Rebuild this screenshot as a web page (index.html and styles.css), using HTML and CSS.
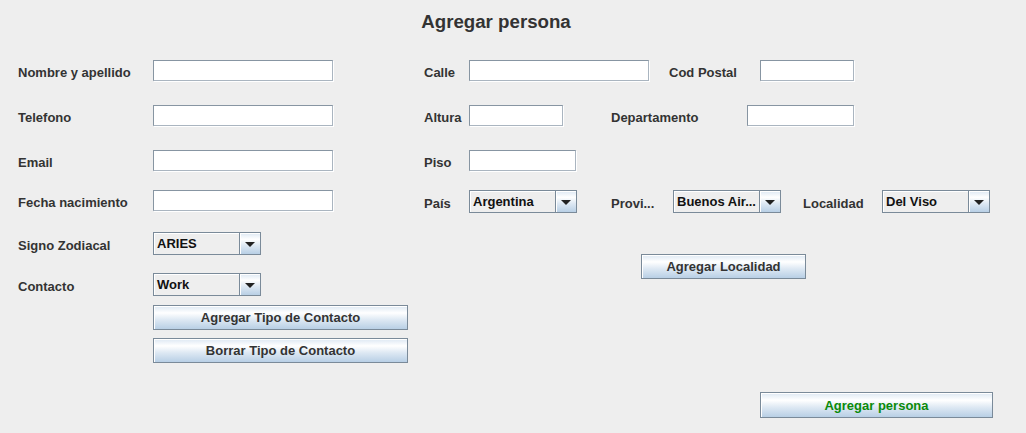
FILE: index.html
```html
<!DOCTYPE html>
<html lang="es">
<head>
<meta charset="utf-8">
<title>Agregar persona</title>
<link rel="stylesheet" href="styles.css">
</head>
<body>
<header class="header"><h1 class="title">Agregar persona</h1></header>
<main class="form">
  <section class="col col-left">
    <div class="row r1"><span class="lbl lw-left">Nombre y apellido</span><input class="tf w181" type="text"></div>
    <div class="row r2"><span class="lbl lw-left">Telefono</span><input class="tf w181" type="text"></div>
    <div class="row r3"><span class="lbl lw-left">Email</span><input class="tf w181" type="text"></div>
    <div class="row r4"><span class="lbl lw-left">Fecha nacimiento</span><input class="tf w181" type="text"></div>
    <div class="row r5"><span class="lbl lw-left">Signo Zodiacal</span><div class="combo"><span class="combo-val">ARIES</span><span class="combo-btn"><span class="tri"></span></span></div></div>
    <div class="row r6"><span class="lbl lw-left">Contacto</span><div class="combo"><span class="combo-val">Work</span><span class="combo-btn"><span class="tri"></span></span></div></div>
    <div class="row r7"><span class="lw-left"></span><button class="btn w255" type="button">Agregar Tipo de Contacto</button></div>
    <div class="row r8"><span class="lw-left"></span><button class="btn w255" type="button">Borrar Tipo de Contacto</button></div>
  </section>
  <section class="col col-right">
    <div class="row r1"><span class="lbl lw-right">Calle</span><input class="tf w181" type="text"><span class="lbl cod">Cod Postal</span><input class="tf w95" type="text"></div>
    <div class="row r2"><span class="lbl lw-right">Altura</span><input class="tf w95" type="text"><span class="lbl depto">Departamento</span><input class="tf w108" type="text"></div>
    <div class="row r3"><span class="lbl lw-right">Piso</span><input class="tf w108" type="text"></div>
    <div class="row r4r"><span class="lbl lw-right">País</span><div class="combo"><span class="combo-val">Argentina</span><span class="combo-btn"><span class="tri"></span></span></div><span class="lbl prov">Provi...</span><div class="combo"><span class="combo-val">Buenos Air...</span><span class="combo-btn"><span class="tri"></span></span></div><span class="lbl loc">Localidad</span><div class="combo"><span class="combo-val">Del Viso</span><span class="combo-btn"><span class="tri"></span></span></div></div>
    <div class="row r5r"><button class="btn btn-loc" type="button">Agregar Localidad</button></div>
  </section>
</main>
<footer class="footer"><button class="btn btn-save" type="button">Agregar persona</button></footer>
</body>
</html>
```

FILE: styles.css
```css
html, body {
  margin: 0;
  padding: 0;
}
body {
  background: #eeeeee;
  font-family: "Liberation Sans", Arial, sans-serif;
  font-weight: bold;
  font-size: 13px;
  color: #333333;
  width: 1026px;
  height: 433px;
  overflow: hidden;
}
.header {
  width: 992px;
  height: 44px;
  display: flex;
  justify-content: center;
  align-items: center;
}
.title {
  margin: 0;
  font-size: 18.7px;
  line-height: 44px;
  font-weight: bold;
  color: #333333;
}
.form {
  display: flex;
  padding-left: 18px;
}
.col {
  display: flex;
  flex-direction: column;
}
.col-left {
  width: 406px;
}
.row {
  display: flex;
  align-items: center;
}
.col-left .r1 { margin-top: 16px; height: 21px; }
.col-left .r2 { margin-top: 24px; height: 21px; }
.col-left .r3 { margin-top: 24px; height: 21px; }
.col-left .r4 { margin-top: 19px; height: 21px; }
.col-left .r5 { margin-top: 21px; height: 23px; }
.col-left .r6 { margin-top: 18px; height: 23px; }
.col-left .r7 { margin-top: 9px; height: 25px; }
.col-left .r8 { margin-top: 8px; height: 25px; }
.col-right .r1 { margin-top: 16px; height: 21px; }
.col-right .r2 { margin-top: 24px; height: 21px; }
.col-right .r3 { margin-top: 24px; height: 21px; }
.col-right .r4r { margin-top: 19px; height: 23px; }
.col-right .r5r { margin-top: 41px; height: 25px; }

.lbl {
  white-space: nowrap;
  line-height: 16px;
  padding-top: 4px;
}
.lw-left { width: 135px; flex: none; }
.lw-right { width: 45px; flex: none; }
.cod { width: 91px; margin-left: 20px; }
.depto { width: 136px; margin-left: 48px; }
.prov { width: 62px; margin-left: 34px; }
.loc { width: 79px; margin-left: 22px; }

.tf {
  -webkit-appearance: none;
  appearance: none;
  box-sizing: border-box;
  height: 21px;
  margin: 0;
  padding: 0 3px;
  background: #ffffff;
  border: 1px solid #8795a2;
  border-bottom-color: #aab5c0;
  border-right-color: #aab5c0;
  box-shadow: 1px 1px 0 #ffffff;
  font: inherit;
  flex: none;
}
.w181 { width: 180px; }
.w95 { width: 94px; }
.w108 { width: 107px; }

.combo {
  box-sizing: border-box;
  width: 108px;
  height: 23px;
  display: flex;
  border: 1px solid #7a8a99;
  background: #eeeeee;
  flex: none;
}
.combo-val {
  flex: 1;
  padding-left: 3px;
  padding-top: 1px;
  line-height: 19px;
  color: #111111;
  white-space: nowrap;
  overflow: hidden;
  box-shadow: inset 1px 1px 0 #ffffff;
}
.combo-btn {
  width: 20px;
  flex: none;
  border-left: 1px solid #7a8a99;
  background: linear-gradient(#dde8f3 0%, #ffffff 30%, #dde8f3 60%, #b8cfe5 100%);
  box-shadow: inset 1px 1px 0 #ffffff;
  display: flex;
  align-items: center;
  justify-content: center;
}
.tri {
  width: 0;
  height: 0;
  border-left: 5px solid transparent;
  border-right: 5px solid transparent;
  border-top: 5px solid #222222;
  margin-top: 1px;
}

.btn {
  -webkit-appearance: none;
  appearance: none;
  box-sizing: border-box;
  height: 25px;
  margin: 0;
  padding: 0;
  border: 1px solid #7a8a99;
  background: linear-gradient(#dde8f3 0%, #ffffff 30%, #dde8f3 60%, #b8cfe5 100%);
  box-shadow: inset 1px 1px 0 #ffffff;
  font: inherit;
  color: #333333;
  text-align: center;
  flex: none;
}
.w255 { width: 255px; }
.btn-loc {
  width: 165px;
  margin-left: 217px;
}
.footer {
  padding-left: 760px;
  margin-top: 29px;
}
.btn-save {
  width: 233px;
  height: 26px;
  color: #0a8a0a;
}
```
